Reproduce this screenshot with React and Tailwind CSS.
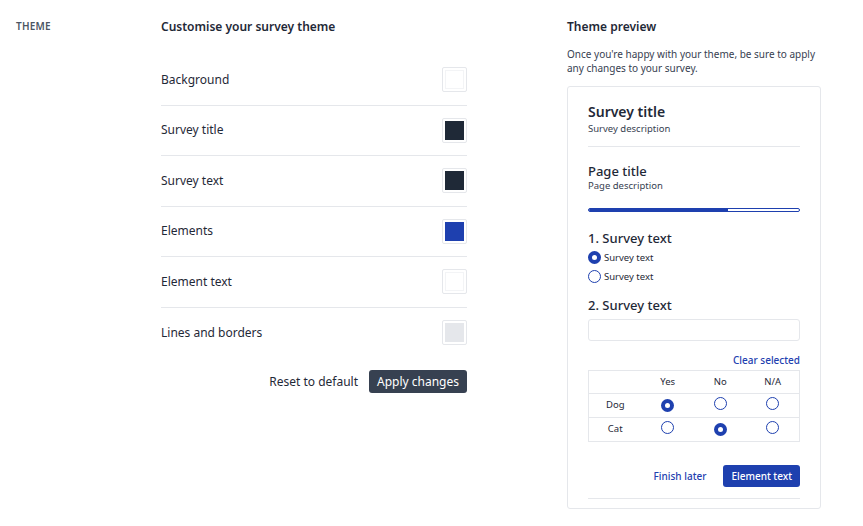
const rows = [
  { label: "Background", color: "bg-white" },
  { label: "Survey title", color: "bg-[#1f2937]" },
  { label: "Survey text", color: "bg-[#1f2937]" },
  { label: "Elements", color: "bg-[#1e40af]" },
  { label: "Element text", color: "bg-white" },
  { label: "Lines and borders", color: "bg-[#e5e7eb]" },
]

function Radio({ on }) {
  return on ? (
    <span className="inline-flex w-[13px] h-[13px] rounded-full bg-[#1e40af] items-center justify-center">
      <span className="w-[5px] h-[5px] rounded-full bg-white" />
    </span>
  ) : (
    <span className="inline-block w-[13px] h-[13px] rounded-full border border-[#1e40af] bg-white" />
  )
}

export default function App() {
  return (
    <div className="flex w-[863px] h-[526px] bg-white text-[#1f2937] font-['Inter',sans-serif] overflow-hidden">
      <div className="w-[161px] pl-4 pt-[19px] text-[10px] font-semibold text-[#4b5563] tracking-wide">THEME</div>
      <div className="w-[306px] pt-[18px]">
        <h2 className="text-[12px] font-semibold">Customise your survey theme</h2>
        <div className="mt-[19px]">
          {rows.map((r, i) => (
            <div key={r.label} className={`flex items-center justify-between h-[50.5px] ${i < rows.length - 1 ? "border-b border-[#e5e7eb]" : ""}`}>
              <span className="text-[12px]">{r.label}</span>
              <span className="w-[25px] h-[25px] border border-[#e5e7eb] rounded-[2px] flex items-center justify-center bg-white">
                <span className={`w-[19px] h-[19px] ${r.color} ${r.color === "bg-white" ? "border border-[#f3f4f6]" : ""}`} />
              </span>
            </div>
          ))}
        </div>
        <div className="flex justify-end items-center gap-[11px] mt-[12px]">
          <span className="text-[12px]">Reset to default</span>
          <button className="bg-[#374151] text-white text-[12px] px-2 h-[23px] rounded-[3px]">Apply changes</button>
        </div>
      </div>
      <div className="ml-[100px] w-[254px] pt-[18px]">
        <h2 className="text-[12px] font-semibold">Theme preview</h2>
        <p className="text-[10px] leading-[14px] mt-[11px] text-[#374151]">Once you're happy with your theme, be sure to apply any changes to your survey.</p>
        <div className="mt-[11px] border border-[#e5e7eb] rounded-[3px] px-5 pt-[16px] h-[423px]">
          <div className="text-[14px] font-semibold leading-[18px]">Survey title</div>
          <div className="text-[9.5px] text-[#374151] mt-[1px]">Survey description</div>
          <div className="border-b border-[#e5e7eb] mt-[10px]" />
          <div className="text-[13px] font-medium mt-[16px] leading-[16px]">Page title</div>
          <div className="text-[9.5px] text-[#374151]">Page description</div>
          <div className="flex mt-[14px] h-[4px] rounded-full border border-[#1e40af] overflow-hidden">
            <div className="w-[66%] bg-[#1e40af]" />
          </div>
          <div className="text-[13px] font-medium mt-[18px] leading-[16px]">1. Survey text</div>
          <div className="flex items-center gap-[3px] text-[9.5px] mt-[5px]"><Radio on />Survey text</div>
          <div className="flex items-center gap-[3px] text-[9.5px] mt-[5px]"><Radio />Survey text</div>
          <div className="text-[13px] font-medium mt-[13px] leading-[16px]">2. Survey text</div>
          <div className="h-[22px] border border-[#e5e7eb] rounded-[3px] mt-[6px]" />
          <div className="text-right text-[10px] font-medium text-[#1e40af] mt-[12px]">Clear selected</div>
          <div className="border border-[#e5e7eb] mt-[2px] text-[9.5px]">
            <div className="grid grid-cols-4 h-[23px] items-center text-center border-b border-[#e5e7eb]">
              <span /><span>Yes</span><span>No</span><span>N/A</span>
            </div>
            <div className="grid grid-cols-4 h-[24px] items-center text-center border-b border-[#e5e7eb]">
              <span>Dog</span><span><Radio on /></span><span><Radio /></span><span><Radio /></span>
            </div>
            <div className="grid grid-cols-4 h-[23px] items-center text-center">
              <span>Cat</span><span><Radio /></span><span><Radio on /></span><span><Radio /></span>
            </div>
          </div>
          <div className="flex justify-end items-center gap-[17px] mt-[23px]">
            <span className="text-[10px] font-medium text-[#1e40af]">Finish later</span>
            <button className="bg-[#1e40af] text-white text-[10px] font-medium px-2 h-[22px] rounded-[3px]">Element text</button>
          </div>
          <div className="border-b border-[#e5e7eb] mt-[11px]" />
        </div>
      </div>
    </div>
  )
}
